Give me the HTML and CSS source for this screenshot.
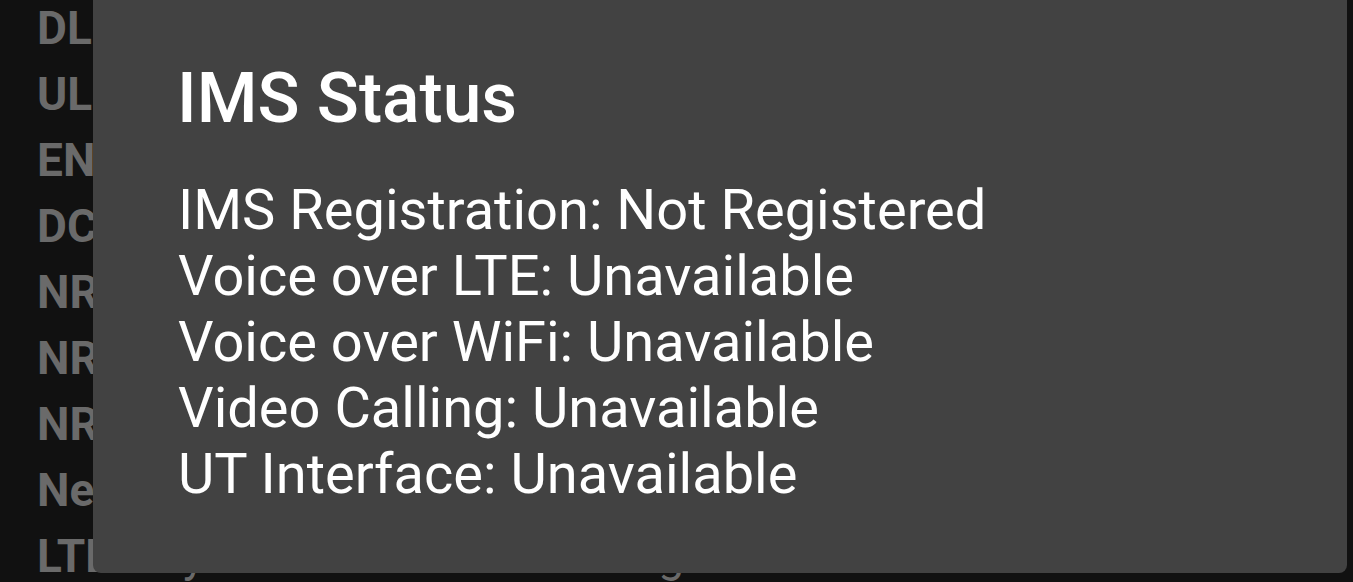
FILE: index.html
```html
<!DOCTYPE html>
<html lang="en">
<head>
  <meta charset="UTF-8">
  <meta name="viewport" content="width=device-width, initial-scale=1.0">
  <title>IMS Status</title>
  <link rel="stylesheet" href="styles.css">
</head>
<body>
  <!-- phone info list behind the dialog -->
  <div class="info">
    <div class="row"><b>DL Bandwidth (kbps):</b> 0</div>
    <div class="row"><b>UL Bandwidth (kbps):</b> 0</div>
    <div class="row"><b>EN-DC Available:</b> false</div>
    <div class="row"><b>DCNR Restricted:</b> false</div>
    <div class="row"><b>NR Available:</b> false</div>
    <div class="row"><b>NR State:</b> NONE</div>
    <div class="row"><b>NR Frequency:</b> UNKNOWN</div>
    <div class="row"><b>Network Slicing Config:</b> none</div>
    <div class="row"><b>LTE</b> <span class="val">Physical Channel Configuration:</span></div>
  </div>

  <!-- dialog -->
  <div class="dialog">
    <div class="title">IMS Status</div>
    <div class="body">
      <div>IMS Registration: Not Registered</div>
      <div>Voice over LTE: Unavailable</div>
      <div>Voice over WiFi: Unavailable</div>
      <div>Video Calling: Unavailable</div>
      <div>UT Interface: Unavailable</div>
    </div>
  </div>
</body>
</html>
```
FILE: styles.css
```css
html, body {
  margin: 0;
  padding: 0;
}
body {
  background: #111111;
  font-family: Roboto, "Liberation Sans", sans-serif;
  width: 1353px;
  height: 582px;
  overflow: hidden;
  position: relative;
}
.info {
  margin-top: -5px;
  padding-left: 37px;
  color: #6a6a6a;
  font-size: 46px;
  line-height: 66px;
}
.row {
  white-space: nowrap;
}
.row b {
  font-weight: 700;
}
.val {
  color: #6a6a6a;
  letter-spacing: 3px;
}
.dialog {
  position: absolute;
  left: 93px;
  top: -24px;
  width: 1254px;
  height: 597px;
  box-sizing: border-box;
  background: #424242;
  border-radius: 8px;
  padding: 82px 0 0 85px;
  color: #ffffff;
}
.title {
  margin-left: -1px;
  font-size: 69.5px;
  font-weight: 500;
  line-height: 82px;
}
.body {
  margin-top: 37px;
  font-size: 56px;
  line-height: 66px;
}
```
